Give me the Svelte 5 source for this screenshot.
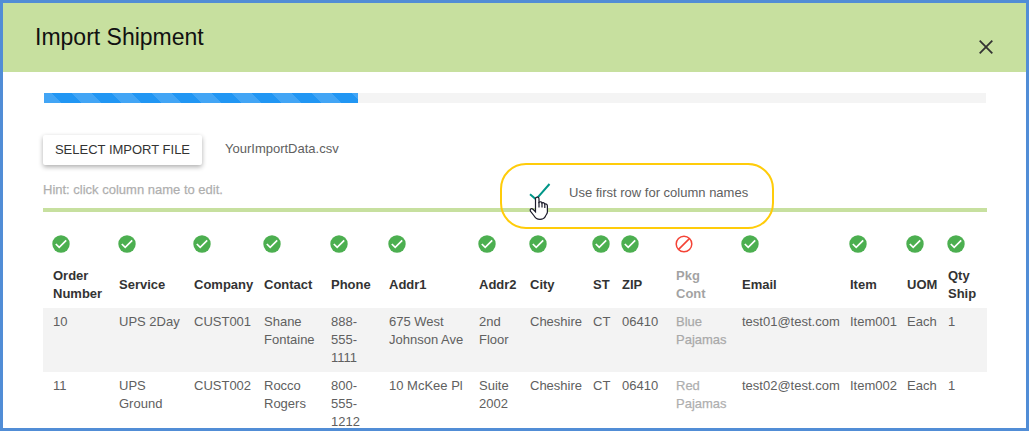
<script>
  const columns = [
    { name: 'Order Number', width: 66 },
    { name: 'Service', width: 75 },
    { name: 'Company', width: 70 },
    { name: 'Contact', width: 67 },
    { name: 'Phone', width: 58 },
    { name: 'Addr1', width: 90 },
    { name: 'Addr2', width: 51 },
    { name: 'City', width: 63 },
    { name: 'ST', width: 29 },
    { name: 'ZIP', width: 54 },
    { name: 'Pkg Cont', width: 66, skipped: true },
    { name: 'Email', width: 108 },
    { name: 'Item', width: 57 },
    { name: 'UOM', width: 41 },
    { name: 'Qty Ship', width: 49 }
  ];
  const rows = [
    ['10', 'UPS 2Day', 'CUST001', 'Shane Fontaine', '888-\n555-\n1111', '675 West\nJohnson Ave', '2nd\nFloor', 'Cheshire', 'CT', '06410', 'Blue\nPajamas', 'test01@test.com', 'Item001', 'Each', '1'],
    ['11', 'UPS\nGround', 'CUST002', 'Rocco\nRogers', '800-\n555-\n1212', '10 McKee Pl', 'Suite\n2002', 'Cheshire', 'CT', '06410', 'Red\nPajamas', 'test02@test.com', 'Item002', 'Each', '1']
  ];
  const progress = 33.35;
  const tracks = columns.map((c) => c.width + 'px').join(' ');
</script>

<div class="dialog">
  <header>
    <h1>Import Shipment</h1>
    <svg class="close" width="14" height="14" viewBox="0 0 14 14"><path d="M.7.7l12.6 12.6M13.3.7L.7 13.3" /></svg>
  </header>

  <main>
    <div class="progress"><div class="bar" style="width: {progress}%"></div></div>

    <div class="file">
      <button>SELECT IMPORT FILE</button>
      <span>YourImportData.csv</span>
    </div>

    <div class="options">
      <span class="hint">Hint: click column name to edit.</span>
      <label>
        <svg width="22" height="18" viewBox="0 0 22 18"><path d="M1 11.3L7 16.3L20.5 1" /></svg>
        <span>Use first row for column names</span>
      </label>
    </div>

    <div class="table">
      <div class="row icons" style="grid-template-columns: {tracks}">
        {#each columns as c}
          <div class="cell">
            {#if c.skipped}
              <svg width="18" height="18" viewBox="0 0 18 18"><circle cx="9" cy="9" r="7.8" fill="none" stroke="#f44336" stroke-width="1.5" /><path d="M3.6 14.4L14.4 3.6" stroke="#f44336" stroke-width="1.6" /></svg>
            {:else}
              <svg width="18" height="18" viewBox="0 0 18 18"><circle cx="9" cy="9" r="8.7" fill="#4caf50" /><path d="M3.8 9L7.2 12.4L14.2 5.4" fill="none" stroke="#fff" stroke-width="1.7" /></svg>
            {/if}
          </div>
        {/each}
      </div>
      <div class="row names" style="grid-template-columns: {tracks}">
        {#each columns as c}<div class="cell" class:skipped={c.skipped}>{c.name}</div>{/each}
      </div>
      {#each rows as row}
        <div class="row data" style="grid-template-columns: {tracks}">
          {#each row as value, i}<div class="cell" class:skipped={columns[i].skipped}>{value}</div>{/each}
        </div>
      {/each}
    </div>
  </main>

  <div class="callout"></div>
  <svg class="pointer" width="20" height="25" viewBox="0 0 20 25">
    <path d="M8.3 1.1C9.4 1.1 10 1.8 10 2.8V6.2C11 5.4 12.8 5.8 13 7C14.2 6.3 15.6 6.9 15.8 8C17.2 7.6 18.4 8.5 18.4 10V16C18.4 18 16.6 19 16.2 20.8C15.2 22.8 13 23.3 11 23.3C8 23.3 6.2 22 5.2 20L1.6 15.4C.4 13.3 2.4 11.8 4 13.3L6.5 15.8V2.8C6.5 1.8 7.2 1.1 8.3 1.1Z" />
    <path class="fingers" d="M10 6V11.5M13 7V11.5M15.8 8V12" />
  </svg>
</div>

<style>
  :global(body) { background: #fff; }
  .dialog {
    position: relative;
    box-sizing: border-box;
    width: 1029px;
    height: 431px;
    overflow: hidden;
    border: 3px solid #518dd6;
    background: #fff;
    color: #606060;
    font: 13px/18px "Liberation Sans", Arial, sans-serif;
  }
  header {
    display: flex;
    justify-content: space-between;
    box-sizing: border-box;
    height: 69px;
    padding: 0 33px 0 32px;
    background: #c7e09f;
  }
  h1 {
    margin: 20px 0 0;
    color: #111;
    font-size: 23px;
    font-weight: 400;
    line-height: 28px;
  }
  .close { margin-top: 37px; fill: none; stroke: #333; stroke-width: 1.8; }
  main { padding: 21px 39px 0 40px; }
  .progress { height: 10px; margin: 0 1px; background: #f4f4f4; }
  .bar {
    height: 10px;
    background: #2196f3 linear-gradient(45deg, #42a5f5 25%, transparent 25%, transparent 50%, #42a5f5 50%, #42a5f5 75%, transparent 75%) -12px 0 / 40px 40px;
  }
  .file { display: flex; align-items: center; gap: 23px; margin-top: 32px; }
  button {
    width: 159px;
    height: 30px;
    padding: 0;
    border: 0;
    border-radius: 2px;
    background: #fff;
    box-shadow: 0 2px 5px rgba(0, 0, 0, .32);
    color: #333;
    font: 13px/30px "Liberation Sans", Arial, sans-serif;
  }
  .file span { margin-top: -2px; }
  .options {
    display: flex;
    box-sizing: border-box;
    height: 47px;
    border-bottom: 4px solid #c7e09f;
  }
  .hint { width: 486px; margin-top: 16px; opacity: .5; -webkit-text-stroke: .25px; }
  label { display: flex; gap: 18px; padding-top: 18px; }
  label span { padding-top: 1px; }
  label svg { fill: none; stroke: #009688; stroke-width: 2; }
  .row { display: grid; }
  .cell { padding-left: 10px; white-space: pre-line; }
  .icons { height: 50px; padding-top: 23px; box-sizing: border-box; }
  .icons svg { display: block; margin-left: -1px; }
  .names { height: 46px; align-items: center; color: #333; font-weight: 700; }
  .names .cell { margin-top: -1px; white-space: normal; }
  .data { box-sizing: border-box; height: 64px; padding: 5px 0; }
  .data:nth-child(odd) { background: #f3f3f3; }
  .skipped { opacity: .45; }
  .data .skipped { opacity: .5; -webkit-text-stroke: .25px; }
  .callout {
    position: absolute;
    left: 497px;
    top: 160px;
    box-sizing: border-box;
    width: 274px;
    height: 66px;
    border: 2px solid #ffcc0a;
    border-radius: 26px;
  }
  .pointer { position: absolute; left: 526px; top: 193px; fill: #fff; stroke: #1b1b2b; stroke-width: 1.2; }
  .fingers { fill: none; }
</style>
